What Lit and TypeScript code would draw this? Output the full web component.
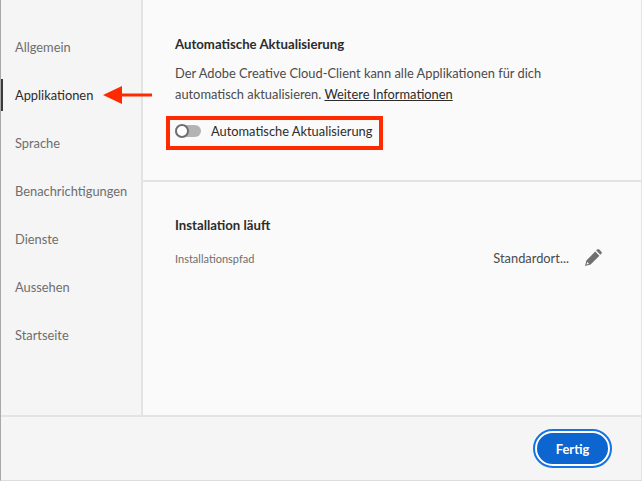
import { LitElement, css, html } from "lit";
import { customElement } from "lit/decorators.js";

const NAV = ["Allgemein", "Applikationen", "Sprache", "Benachrichtigungen", "Dienste", "Aussehen", "Startseite"];

@customElement("app-root")
export class AppRoot extends LitElement {
  static override styles = css`
    :host {
      display: block;
      position: relative;
      width: 642px;
      height: 481px;
      overflow: hidden;
      box-sizing: border-box;
      border-left: 1px solid #a8a8a8;
      border-bottom: 1px solid #dcdcdc;
      border-right: 1px solid #e4e4e4;
      background: #f5f5f5;
      font-family: "Lato", "Open Sans", sans-serif;
      font-size: 12.85px;
      color: #4b4b4b;
    }

    .top {
      display: flex;
      height: 415px;
      border-bottom: 2px solid #e3e3e3;
    }

    .side {
      width: 140px;
      flex: none;
      padding-top: 23px;
      background: #f5f5f5;
      border-right: 2px solid #e3e3e3;
    }

    .nav {
      position: relative;
      display: flex;
      align-items: center;
      height: 48px;
      padding-left: 14px;
      color: #6e6e6e;
    }

    .nav.active {
      color: #2c2c2c;
    }

    .nav.active::before {
      content: "";
      position: absolute;
      left: 0;
      top: 8px;
      width: 2px;
      height: 32px;
      background: #3a3a3a;
    }

    .main {
      flex: 1;
      background: #fafafa;
    }

    .section {
      padding: 36px 32px 0;
      height: 182px;
      box-sizing: border-box;
      border-bottom: 2px solid #e3e3e3;
    }

    .section.second {
      border-bottom: 0;
      padding-top: 35px;
      padding-right: 39px;
    }

    h2 {
      margin: 0;
      font-size: 13.2px;
      line-height: 17px;
      font-weight: 700;
      color: #2c2c2c;
    }

    p {
      margin: 10px 0 0;
      line-height: 21px;
      color: #4b4b4b;
    }

    u {
      color: #2c2c2c;
    }

    .toggle-row {
      display: flex;
      align-items: center;
      gap: 10px;
      margin-top: 18px;
      color: #2c2c2c;
    }

    .toggle {
      position: relative;
      width: 26px;
      height: 12px;
      border-radius: 6px;
      background: #b3b3b3;
    }

    .toggle::before {
      content: "";
      position: absolute;
      left: 0;
      top: -1px;
      box-sizing: border-box;
      width: 14px;
      height: 14px;
      border-radius: 50%;
      background: #fff;
      border: 2px solid #6e6e6e;
    }

    .path-row {
      display: flex;
      align-items: center;
      margin-top: 13px;
      height: 22px;
    }

    .label {
      flex: 1;
      font-size: 11px;
      color: #6e6e6e;
    }

    .value {
      color: #4b4b4b;
      margin-right: 15px;
    }

    .pencil {
      display: block;
    }

    .footer {
      display: flex;
      justify-content: flex-end;
      align-items: center;
      height: 63px;
      padding-right: 31px;
    }

    .btn {
      box-sizing: border-box;
      width: 75px;
      height: 35px;
      border: 2px solid #fff;
      outline: 2px solid #1473e6;
      border-radius: 18px;
      background: #0d66d0;
      color: #fff;
      font: inherit;
      font-weight: 700;
      padding: 0;
    }

    .mark {
      position: absolute;
      box-sizing: border-box;
      left: 165px;
      top: 116px;
      width: 217px;
      height: 34px;
      border: 4px solid #ff2a00;
    }

    .arrow {
      position: absolute;
      left: 102px;
      top: 85px;
      display: block;
    }
  `;

  override render() {
    return html`
      <div class="top">
        <nav class="side">
          ${NAV.map((n) => html`<div class="nav ${n === "Applikationen" ? "active" : ""}">${n}</div>`)}
        </nav>
        <div class="main">
          <section class="section">
            <h2>Automatische Aktualisierung</h2>
            <p>
              Der Adobe Creative Cloud-Client kann alle Applikationen für dich<br />
              automatisch aktualisieren. <u>Weitere Informationen</u>
            </p>
            <div class="toggle-row"><span class="toggle"></span>Automatische Aktualisierung</div>
          </section>
          <section class="section second">
            <h2>Installation läuft</h2>
            <div class="path-row">
              <span class="label">Installationspfad</span>
              <span class="value">Standardort...</span>
              <svg class="pencil" width="18" height="18" viewBox="0 0 18 18" fill="#707070">
                <path fill-rule="evenodd" d="M1 17 2.4 11.4 11.2 2.6 15.4 6.8 6.6 15.6ZM2.6 15.4 5 14.8 3.2 13Z" />
                <path d="M12.2 1.6 13.2.6c.6-.5 1.4-.5 2 0l2.2 2.2c.5.6.5 1.4 0 2l-1 1z" />
              </svg>
            </div>
          </section>
        </div>
      </div>
      <div class="footer"><button class="btn">Fertig</button></div>
      <div class="mark"></div>
      <svg class="arrow" width="50" height="20" viewBox="0 0 50 20" fill="#ff2a00">
        <path d="M0 10 19 1V8.5H49V11.5H19V19Z" />
      </svg>
    `;
  }
}
